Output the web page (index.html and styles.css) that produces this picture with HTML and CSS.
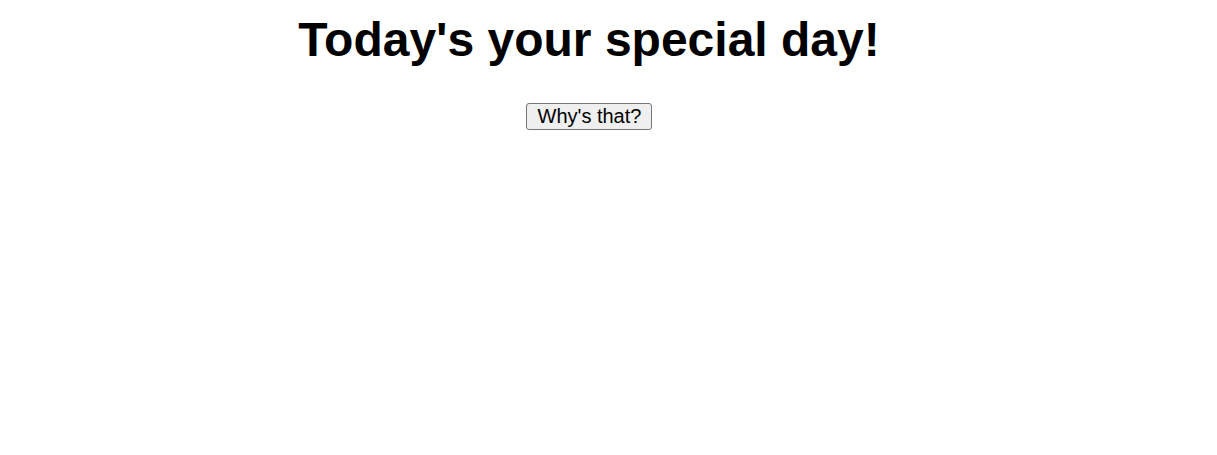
FILE: index.html
```html
<!DOCTYPE html>
<html>
<head>
<meta charset="utf-8">
<link rel="stylesheet" href="styles.css">
</head>
<body>
<main class="page">
  <h1 class="title">Today's your special day!</h1>
  <button class="why">Why's that?</button>
</main>
</body>
</html>
```
FILE: styles.css
```css
body {
  margin: 8px;
  background: #fff;
  font-family: "Liberation Sans", Arial, sans-serif;
}
.page {
  width: 1162px;
  padding-top: 4px;
  text-align: center;
}
.title {
  margin: 0 0 36px;
  font-size: 48px;
  font-weight: bold;
  color: #000;
}
.why {
  font-family: "Liberation Sans", Arial, sans-serif;
  font-size: 20px;
  padding: 1px 10px 1px 11px;
  border: 1px solid #767676;
  border-radius: 3px;
  background: #efefef;
  color: #000;
}
```
